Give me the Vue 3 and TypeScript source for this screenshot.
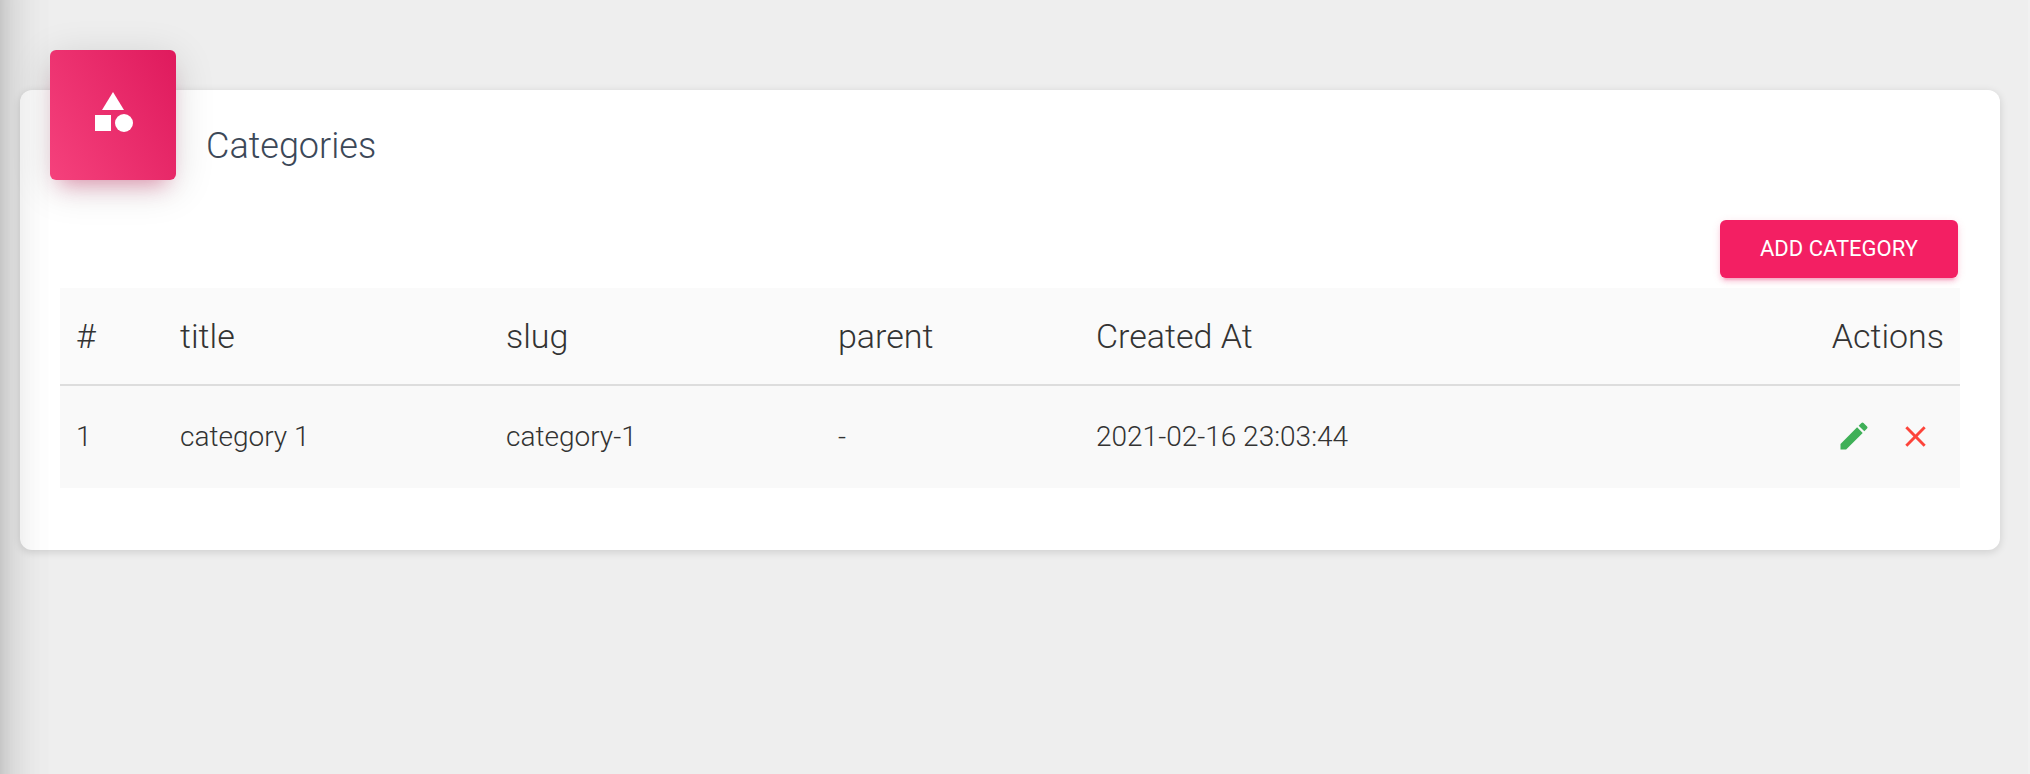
<script setup lang="ts">
interface Category {
  id: number
  title: string
  slug: string
  parent: string
  createdAt: string
}

const categories: Category[] = [
  { id: 1, title: 'category 1', slug: 'category-1', parent: '-', createdAt: '2021-02-16 23:03:44' },
]
</script>

<template>
  <div class="page">
    <div class="sidebar-edge"></div>
    <main class="card">
      <header class="card-header">
        <div class="tile">
          <svg viewBox="0 0 24 24" width="48" height="48" fill="#fff">
            <path d="M12 2l-5.5 9h11z" />
            <circle cx="17.5" cy="17.5" r="4.5" />
            <path d="M3 13.5h8v8H3z" />
          </svg>
        </div>
        <h4 class="title">Categories</h4>
      </header>
      <div class="toolbar">
        <button class="add" type="button">ADD CATEGORY</button>
      </div>
      <table class="table">
        <colgroup>
          <col class="c-id" />
          <col class="c-title" />
          <col class="c-slug" />
          <col class="c-parent" />
          <col class="c-created" />
          <col />
        </colgroup>
        <thead>
          <tr>
            <th>#</th>
            <th>title</th>
            <th>slug</th>
            <th>parent</th>
            <th>Created At</th>
            <th class="right">Actions</th>
          </tr>
        </thead>
        <tbody>
          <tr v-for="c in categories" :key="c.id">
            <td>{{ c.id }}</td>
            <td>{{ c.title }}</td>
            <td>{{ c.slug }}</td>
            <td>{{ c.parent }}</td>
            <td>{{ c.createdAt }}</td>
            <td>
              <div class="actions">
                <svg class="edit" viewBox="0 0 24 24" width="36" height="36">
                  <path d="M3 17.25V21h3.75L17.81 9.94l-3.75-3.75L3 17.25zM20.71 7.04a.996.996 0 0 0 0-1.41l-2.34-2.34a.996.996 0 0 0-1.41 0l-1.83 1.83 3.75 3.75 1.83-1.83z" />
                </svg>
                <svg class="remove" viewBox="0 0 24 24" width="35" height="35">
                  <path d="M19 6.41L17.59 5 12 10.59 6.41 5 5 6.41 10.59 12 5 17.59 6.41 19 12 13.41 17.59 19 19 17.59 13.41 12z" />
                </svg>
              </div>
            </td>
          </tr>
        </tbody>
      </table>
    </main>
  </div>
</template>

<style>
body {
  margin: 0;
  background: #eee;
}
</style>

<style scoped>
.page {
  position: relative;
  box-sizing: border-box;
  height: 774px;
  padding: 90px 28px 0 20px;
  border-right: 2px solid #f1f1f1;
  overflow: hidden;
  background: #eee;
  font-family: Roboto, 'Liberation Sans', sans-serif;
  font-weight: 300;
}
/* Off-canvas sidebar whose shadow falls over the content */
.sidebar-edge {
  position: absolute;
  z-index: 2;
  top: -100px;
  bottom: -100px;
  left: -520px;
  width: 520px;
  box-shadow:
    0 20px 60px -24px rgba(0, 0, 0, 0.4),
    0 8px 50px 0 rgba(0, 0, 0, 0.12),
    0 16px 20px -10px rgba(0, 0, 0, 0.15);
  pointer-events: none;
}
.card {
  box-sizing: border-box;
  height: 460px;
  padding: 0 40px;
  border-radius: 12px;
  background: #fff;
  box-shadow: 0 2px 8px 0 rgba(0, 0, 0, 0.14);
}
.card-header {
  display: flex;
  height: 130px;
  margin-left: -10px;
}
.tile {
  display: flex;
  align-items: center;
  justify-content: center;
  width: 126px;
  height: 130px;
  margin-top: -40px;
  border-radius: 6px;
  background: linear-gradient(60deg, #f5417c, #df1a5d);
  box-shadow:
    0 8px 40px 0 rgba(0, 0, 0, 0.14),
    0 14px 20px -10px rgba(233, 30, 99, 0.4);
}
.tile svg {
  display: block;
  margin-top: -6px;
}
.title {
  margin: 31px 0 0 30px;
  color: #3c4858;
  font-size: 36px;
  font-weight: 300;
  line-height: 50px;
}
.toolbar {
  display: flex;
  justify-content: flex-end;
  height: 68px;
  padding-right: 2px;
}
.add {
  width: 238px;
  height: 58px;
  padding: 0;
  border: 0;
  border-radius: 6px;
  background: #f31f63;
  box-shadow:
    0 4px 4px 0 rgba(233, 30, 99, 0.14),
    0 6px 2px -4px rgba(233, 30, 99, 0.2),
    0 2px 10px 0 rgba(233, 30, 99, 0.12);
  color: #fff;
  font-family: inherit;
  font-size: 22px;
  font-weight: 400;
  line-height: 58px;
}
.table {
  width: 1900px;
  border-collapse: separate;
  border-spacing: 0;
  table-layout: fixed;
  background: #fafafa;
  color: #333;
}
.c-id { width: 104px; }
.c-title { width: 326px; }
.c-slug { width: 332px; }
.c-parent { width: 258px; }
.c-created { width: 600px; }
th,
td {
  box-sizing: border-box;
  padding: 0 16px;
  font-weight: 300;
  text-align: left;
  vertical-align: middle;
}
th {
  height: 98px;
  border-bottom: 2px solid #ddd;
  font-size: 34px;
}
td {
  height: 102px;
  padding-bottom: 2px;
  background: #f9f9f9;
  font-size: 28px;
}
.right {
  text-align: right;
}
.actions {
  display: flex;
  align-items: center;
  justify-content: flex-end;
  gap: 26.5px;
  padding-right: 11px;
}
.edit {
  fill: #3fb058;
}
.remove {
  fill: #fd443a;
}
</style>
